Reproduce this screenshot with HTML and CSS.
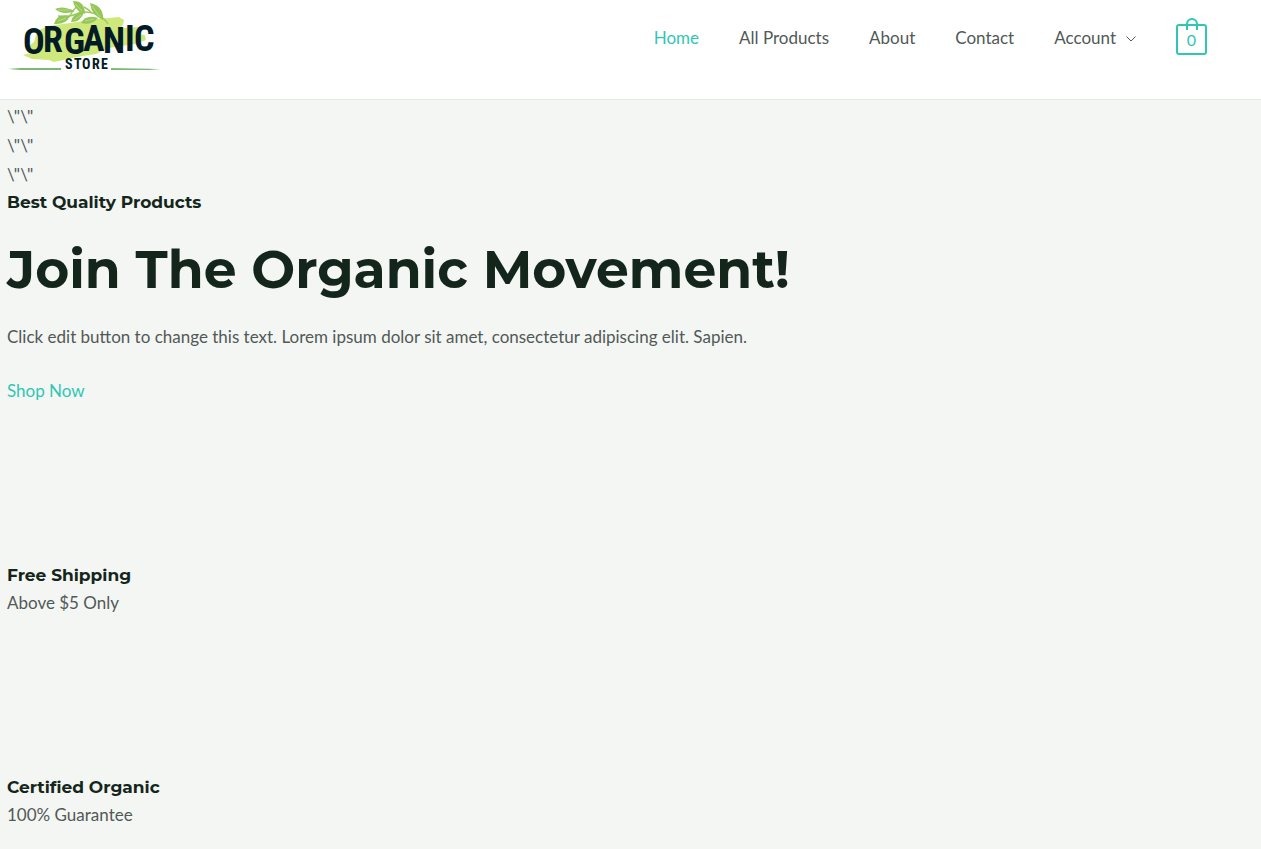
FILE: index.html
```html
<!DOCTYPE html>
<html lang="en">
<head>
<meta charset="utf-8">
<meta name="viewport" content="width=device-width, initial-scale=1">
<title>Organic Store</title>
<link rel="stylesheet" href="styles.css">
</head>
<body>
<header class="site-header">
  <a class="logo" href="#" aria-label="Organic Store">
    <svg class="logo-art" viewBox="0 0 157 72" aria-hidden="true">
      <defs>
        <linearGradient id="rule-left"><stop offset="0" stop-color="#7fb77a" stop-opacity="0"/><stop offset=".25" stop-color="#7fb77a"/><stop offset="1" stop-color="#7fb77a"/></linearGradient>
        <linearGradient id="rule-right"><stop offset="0" stop-color="#7fb77a"/><stop offset=".75" stop-color="#7fb77a"/><stop offset="1" stop-color="#7fb77a" stop-opacity="0"/></linearGradient>
      </defs>
      <path fill="#cfe87c" d="M41 26 70 22 90 19 112 17 117 20 116 25 113 28 133 27 131 34 138 35 139 40 128 44 102 48 89 54 70 57 47 62 42 60 25 59 16 55 27 52 22 46 27 42 30 31Z"/>
      <g fill="none" stroke="#9ccb5f" stroke-width="1.4"><path d="M51 16Q62 18 74 12Q93 11 101 24"/><path d="M62 17Q66 10 70 6M74 13Q71 9 69 6M85 13Q81 9 77 7"/></g>
      <g fill="#94c757">
        <path d="M48 9Q55 5 68 11Q56 16 48 9Z"/><path d="M47 24Q50 13 63 16Q59 25 47 24Z"/><path d="M66 1Q78 1 78 14Q67 10 66 1Z"/><path d="M64 22Q66 12 77 12Q74 22 64 22Z"/><path d="M83 3Q97 6 96 20Q84 15 83 3Z"/><path d="M74 23Q79 14 91 18Q84 26 74 23Z"/>
      </g>
      <g fill="none" stroke="#c9e49f" stroke-width=".7"><path d="M51 10H62M51 21 59 18M68 4 75 11M67 20 74 15M85 6 93 17M78 21 87 19"/></g>
      <path fill="url(#rule-left)" d="M0 68 54 68V70H5Z"/>
      <path fill="url(#rule-right)" d="M104 68 155 69 150 70H104Z"/>
      <text class="logo-name" x="16 36 57 76 96 118 127" y="54 52 54 51 53 51 51">ORGANIC</text>
      <text class="logo-sub" x="58 67 75 85 94" y="69">STORE</text>
    </svg>
  </a>
  <nav class="main-nav" aria-label="Main">
    <a class="nav-link nav-link-current" href="#">Home</a>
    <a class="nav-link" href="#">All Products</a>
    <a class="nav-link" href="#">About</a>
    <a class="nav-link" href="#">Contact</a>
    <a class="nav-link" href="#">Account
      <svg class="chevron" viewBox="0 0 10 6" aria-hidden="true"><path d="M.5.5 5 5 9.5.5"/></svg>
    </a>
    <a class="cart" href="#" aria-label="Cart, 0 items">
      <svg class="cart-handle" viewBox="0 0 12 12" aria-hidden="true"><path d="M1 12V6a5 5 0 0 1 10 0v6"/></svg>
      <span class="cart-count">0</span>
    </a>
  </nav>
</header>
<main class="content">
  <p class="stray">\"\"</p>
  <p class="stray">\"\"</p>
  <p class="stray">\"\"</p>
  <section class="hero">
    <h2 class="small-title">Best Quality Products</h2>
    <h1 class="hero-title">Join The Organic Movement!</h1>
    <p class="hero-text">Click edit button to change this text. Lorem ipsum dolor sit amet, consectetur adipiscing elit. Sapien.</p>
    <a class="shop-link" href="#">Shop Now</a>
  </section>
  <section class="feature">
    <h2 class="small-title">Free Shipping</h2>
    <p class="feature-text">Above $5 Only</p>
  </section>
  <section class="feature">
    <h2 class="small-title">Certified Organic</h2>
    <p class="feature-text">100% Guarantee</p>
  </section>
</main>
</body>
</html>
```

FILE: styles.css
```css
* { box-sizing: border-box; }
body {
  margin: 0;
  background: #f4f6f3;
  color: #515957;
  font: 17px/29px Lato, "Liberation Sans", sans-serif;
}
h1, h2, p { margin: 0; }
a { color: #2fc7b3; text-decoration: none; }

.site-header {
  display: flex;
  justify-content: space-between;
  align-items: flex-start;
  min-height: 100px;
  padding: 0 54px 0 7px;
  background: #fff;
  border-bottom: 1px solid #e6e8e6;
}
.logo { display: block; }
.logo-art { display: block; width: 157px; height: 72px; }
.logo-name {
  font: 700 36px "Liberation Sans Narrow", "Roboto Condensed", "Open Sans Condensed", Lato, sans-serif;
  fill: #031b25;
}
.logo-sub {
  font: 700 14px "Liberation Sans Narrow", "Roboto Condensed", Lato, sans-serif;
  fill: #031b25;
}

.main-nav { display: flex; align-items: center; gap: 40px; height: 76px; }
.nav-link { display: flex; align-items: center; gap: 10px; margin-bottom: 2px; color: #515957; }
.nav-link-current { color: #2fc7b3; }
.chevron { width: 10px; height: 6px; margin-top: 4px; fill: none; stroke: #515957; }
.cart {
  position: relative;
  width: 31px;
  height: 31px;
  margin-top: 3px;
  border: 2px solid #2fc7b3;
  border-radius: 3px;
  text-align: center;
  line-height: 27px;
  font-size: 16px;
}
.cart-handle {
  position: absolute;
  top: -8px;
  left: 8px;
  width: 12px;
  height: 12px;
  fill: none;
  stroke: #2fc7b3;
  stroke-width: 2;
}

.content { padding: 2px 7px 20px; }
.small-title {
  color: #14261c;
  font: 700 17px/26px Montserrat, Inter, sans-serif;
}
.hero-title {
  margin: 20px 0 17px;
  color: #14261c;
  font: 700 52px/70px Montserrat, Inter, sans-serif;
}
.hero-text { margin-bottom: 25px; }
.shop-link { display: inline-block; }
.feature { margin-top: 157px; }
```
